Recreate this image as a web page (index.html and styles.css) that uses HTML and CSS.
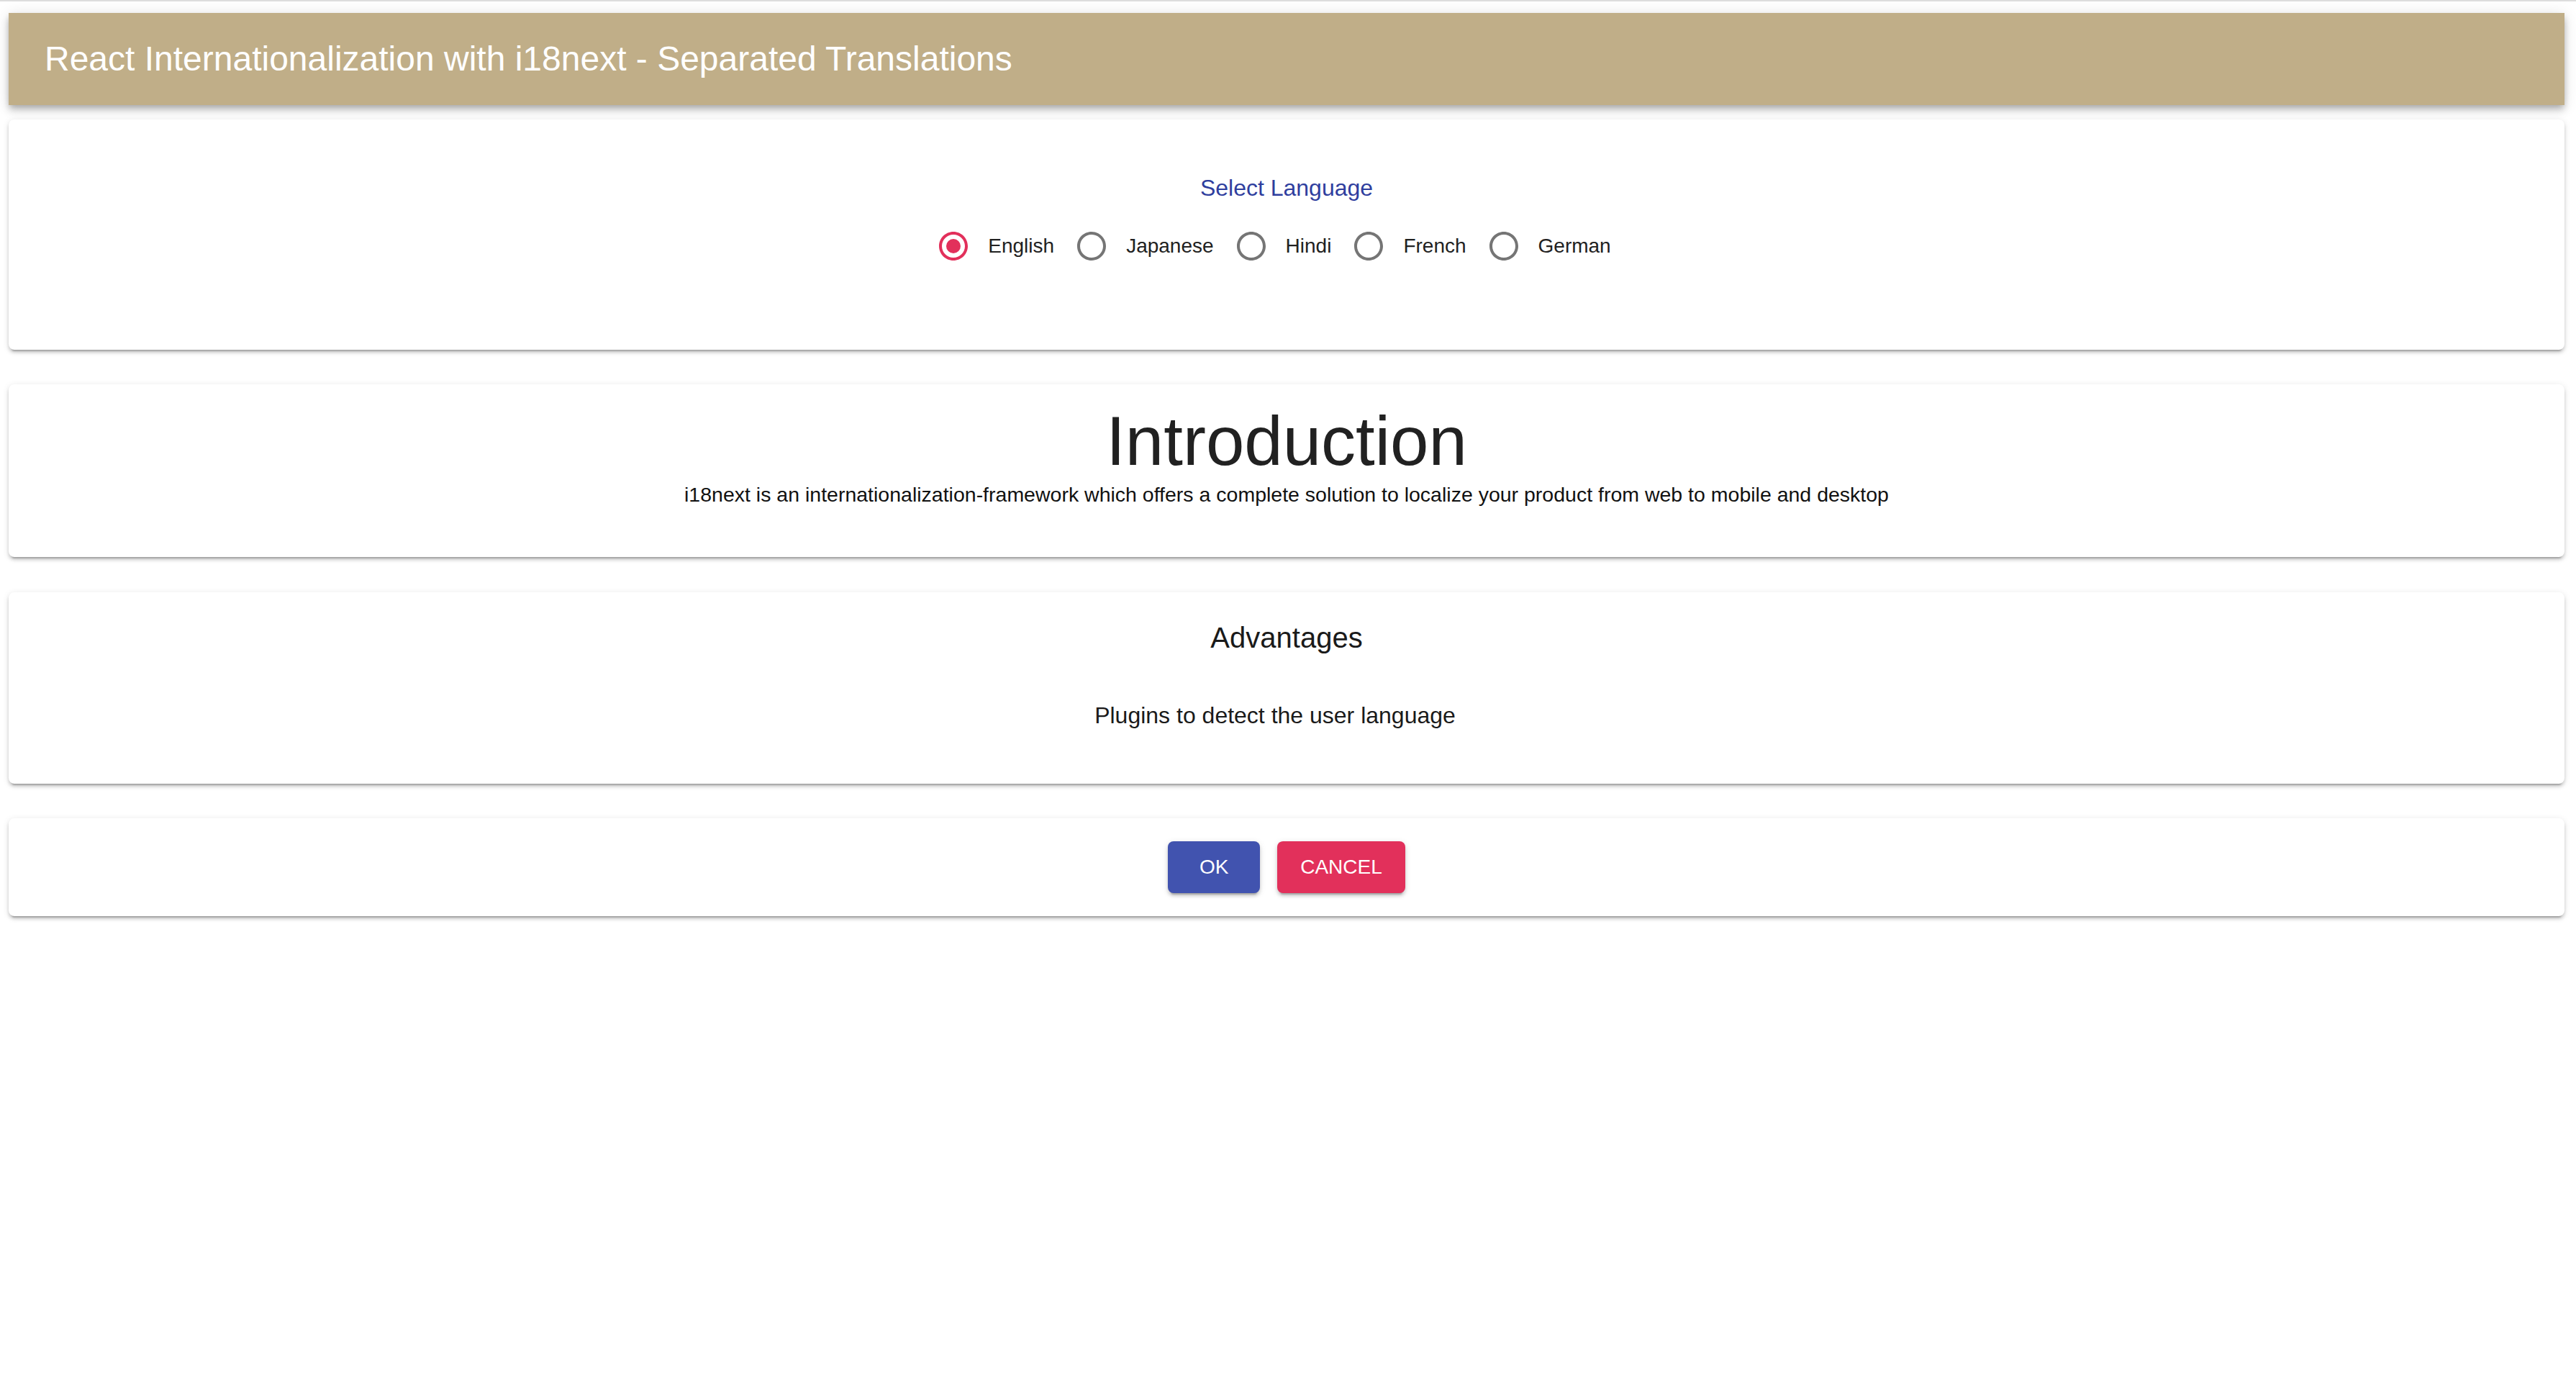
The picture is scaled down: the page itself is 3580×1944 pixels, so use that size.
FILE: index.html
```html
<!DOCTYPE html>
<html lang="en">
<head>
<meta charset="utf-8">
<title>React Internationalization with i18next - Separated Translations</title>
<link rel="stylesheet" href="styles.css">
</head>
<body>
<div class="page">
  <header class="appbar">
    <h1 class="appbar-title">React Internationalization with i18next - Separated Translations</h1>
  </header>

  <section class="card card-lang">
    <div class="form-label">Select Language</div>
    <div class="radio-group" role="radiogroup">
      <label class="radio-label">
        <span class="radio checked">
          <svg viewBox="0 0 24 24" width="48" height="48"><path d="M12 2C6.48 2 2 6.48 2 12s4.48 10 10 10 10-4.48 10-10S17.52 2 12 2zm0 18c-4.42 0-8-3.58-8-8s3.58-8 8-8 8 3.58 8 8-3.58 8-8 8z"/><circle cx="12" cy="12" r="5"/></svg>
        </span>
        <span class="radio-text">English</span>
      </label>
      <label class="radio-label">
        <span class="radio">
          <svg viewBox="0 0 24 24" width="48" height="48"><path d="M12 2C6.48 2 2 6.48 2 12s4.48 10 10 10 10-4.48 10-10S17.52 2 12 2zm0 18c-4.42 0-8-3.58-8-8s3.58-8 8-8 8 3.58 8 8-3.58 8-8 8z"/></svg>
        </span>
        <span class="radio-text">Japanese</span>
      </label>
      <label class="radio-label">
        <span class="radio">
          <svg viewBox="0 0 24 24" width="48" height="48"><path d="M12 2C6.48 2 2 6.48 2 12s4.48 10 10 10 10-4.48 10-10S17.52 2 12 2zm0 18c-4.42 0-8-3.58-8-8s3.58-8 8-8 8 3.58 8 8-3.58 8-8 8z"/></svg>
        </span>
        <span class="radio-text">Hindi</span>
      </label>
      <label class="radio-label">
        <span class="radio">
          <svg viewBox="0 0 24 24" width="48" height="48"><path d="M12 2C6.48 2 2 6.48 2 12s4.48 10 10 10 10-4.48 10-10S17.52 2 12 2zm0 18c-4.42 0-8-3.58-8-8s3.58-8 8-8 8 3.58 8 8-3.58 8-8 8z"/></svg>
        </span>
        <span class="radio-text">French</span>
      </label>
      <label class="radio-label">
        <span class="radio">
          <svg viewBox="0 0 24 24" width="48" height="48"><path d="M12 2C6.48 2 2 6.48 2 12s4.48 10 10 10 10-4.48 10-10S17.52 2 12 2zm0 18c-4.42 0-8-3.58-8-8s3.58-8 8-8 8 3.58 8 8-3.58 8-8 8z"/></svg>
        </span>
        <span class="radio-text">German</span>
      </label>
    </div>
  </section>

  <section class="card card-intro">
    <h2 class="intro-title">Introduction</h2>
    <p class="intro-text">i18next is an internationalization-framework which offers a complete solution to localize your product from web to mobile and desktop</p>
  </section>

  <section class="card card-adv">
    <h3 class="adv-title">Advantages</h3>
    <p class="adv-text">Plugins to detect the user language</p>
  </section>

  <section class="card card-actions">
    <button class="btn btn-ok" type="button">OK</button>
    <button class="btn btn-cancel" type="button">Cancel</button>
  </section>
</div>
</body>
</html>
```

FILE: styles.css
```css
* { box-sizing: border-box; }

html, body {
  margin: 0;
  padding: 0;
}

body {
  background: #ffffff;
  border-top: 2px solid #dddddd;
  font-family: "Liberation Sans", Arial, Helvetica, sans-serif;
  color: #212121;
  min-height: 1944px;
}

.page {
  padding: 16px 16px 0 12px;
  display: flex;
  flex-direction: column;
}

.appbar {
  height: 128px;
  background: #c0ae88;
  display: flex;
  align-items: center;
  padding: 0 48px;
  box-shadow: 0 4px 8px -2px rgba(0,0,0,0.2), 0 8px 10px 0 rgba(0,0,0,0.14), 0 2px 20px 0 rgba(0,0,0,0.12);
  position: relative;
  z-index: 1;
}

.appbar-title {
  margin: 0;
  color: #ffffff;
  font-weight: 400;
  font-size: 48px;
  line-height: 1.6;
  padding-left: 2px;
}

.card {
  background: #ffffff;
  border-radius: 8px;
  box-shadow: 0 6px 2px -4px rgba(0,0,0,0.2), 0 4px 4px 0 rgba(0,0,0,0.14), 0 2px 10px 0 rgba(0,0,0,0.12);
  text-align: center;
}

.card-lang {
  margin-top: 20px;
  padding: 79px 0 102px;
  display: flex;
  flex-direction: column;
  align-items: center;
}

.form-label {
  color: #2f3e9e;
  font-size: 32px;
  line-height: 1;
  margin-bottom: 23px;
}

.radio-group {
  display: flex;
  flex-direction: row;
  align-items: center;
}

.radio-label {
  display: inline-flex;
  align-items: center;
  margin-left: -22px;
  margin-right: 32px;
  cursor: pointer;
}

.radio {
  display: inline-flex;
  padding: 18px;
  fill: #757575;
}

.radio.checked {
  fill: #e2305b;
}

.radio svg {
  display: block;
}

.radio-text {
  font-size: 28px;
  line-height: 1.43;
  margin-left: 6px;
  color: #212121;
}

.card-intro {
  margin-top: 48px;
  padding: 25px 0 67px;
}

.intro-title {
  margin: 0;
  font-size: 96px;
  font-weight: 400;
  line-height: 1.12;
  color: #212121;
}

.intro-text {
  margin: 0;
  font-size: 28.5px;
  line-height: 40px;
  color: #111111;
}

.card-adv {
  margin-top: 49px;
  padding: 31px 0 71px;
}

.adv-title {
  margin: 0;
  font-size: 40px;
  font-weight: 400;
  line-height: 1.6;
  color: #1a1a1a;
}

.adv-text {
  margin: 52px 0 0;
  padding-right: 32px;
  font-size: 32px;
  line-height: 1.5;
  color: #1a1a1a;
}

.card-actions {
  margin-top: 48px;
  padding: 32px 0;
  display: flex;
  justify-content: center;
  gap: 24px;
}

.btn {
  height: 72px;
  min-width: 128px;
  padding: 0 32px;
  border: 0;
  border-radius: 8px;
  font-family: "Liberation Sans", Arial, Helvetica, sans-serif;
  font-size: 28px;
  font-weight: 400;
  text-transform: uppercase;
  color: #ffffff;
  box-shadow: 0 6px 2px -4px rgba(0,0,0,0.2), 0 4px 4px 0 rgba(0,0,0,0.14), 0 2px 10px 0 rgba(0,0,0,0.12);
  cursor: pointer;
}

.btn-ok { background: #4153af; }
.btn-cancel { background: #e2305b; }
```
